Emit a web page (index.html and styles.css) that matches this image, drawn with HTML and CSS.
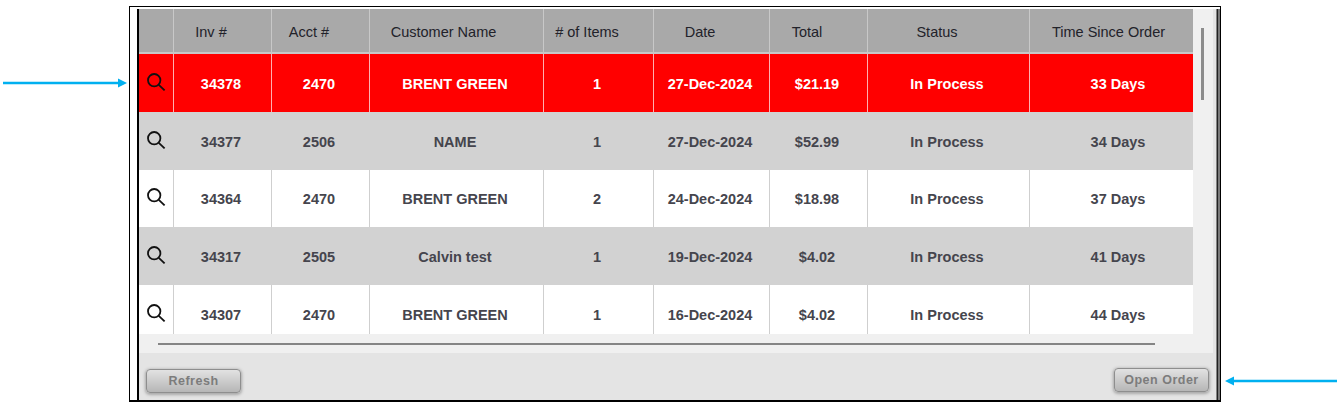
FILE: index.html
```html
<!DOCTYPE html>
<html lang="en">
<head>
<meta charset="utf-8">
<title>Orders</title>
<link rel="stylesheet" href="styles.css">
</head>
<body>
<svg class="arrow arrow-left" width="124" height="10" viewBox="0 0 124 10"><path d="M0 5H117" stroke="#00b0f0" stroke-width="2.6" fill="none"/><path d="M115 .5l9 4.5-9 4.5z" fill="#00b0f0"/></svg>
<div class="frame">
  <div class="panel">
    <div class="upper">
      <div class="grid-area">
        <div class="table">
          <div class="row head">
            <div class="cell"></div><div class="cell">Inv #</div><div class="cell">Acct #</div><div class="cell name-head">Customer Name</div><div class="cell"># of Items</div><div class="cell">Date</div><div class="cell">Total</div><div class="cell">Status</div><div class="cell last">Time Since Order</div>
          </div>
          <div class="row selected h1">
            <div class="cell"><svg class="lens" viewBox="0 0 20 20"><circle cx="8.2" cy="8.2" r="6.2"/><path d="M12.8 12.8L18.6 18.4"/></svg></div><div class="cell">34378</div><div class="cell">2470</div><div class="cell">BRENT GREEN</div><div class="cell">1</div><div class="cell">27-Dec-2024</div><div class="cell">$21.19</div><div class="cell">In Process</div><div class="cell last">33 Days</div>
          </div>
          <div class="row alt h1">
            <div class="cell"><svg class="lens" viewBox="0 0 20 20"><circle cx="8.2" cy="8.2" r="6.2"/><path d="M12.8 12.8L18.6 18.4"/></svg></div><div class="cell">34377</div><div class="cell">2506</div><div class="cell">NAME</div><div class="cell">1</div><div class="cell">27-Dec-2024</div><div class="cell">$52.99</div><div class="cell">In Process</div><div class="cell last">34 Days</div>
          </div>
          <div class="row h2">
            <div class="cell"><svg class="lens" viewBox="0 0 20 20"><circle cx="8.2" cy="8.2" r="6.2"/><path d="M12.8 12.8L18.6 18.4"/></svg></div><div class="cell">34364</div><div class="cell">2470</div><div class="cell">BRENT GREEN</div><div class="cell">2</div><div class="cell">24-Dec-2024</div><div class="cell">$18.98</div><div class="cell">In Process</div><div class="cell last">37 Days</div>
          </div>
          <div class="row alt h1">
            <div class="cell"><svg class="lens" viewBox="0 0 20 20"><circle cx="8.2" cy="8.2" r="6.2"/><path d="M12.8 12.8L18.6 18.4"/></svg></div><div class="cell">34317</div><div class="cell">2505</div><div class="cell">Calvin test</div><div class="cell">1</div><div class="cell">19-Dec-2024</div><div class="cell">$4.02</div><div class="cell">In Process</div><div class="cell last">41 Days</div>
          </div>
          <div class="row h1">
            <div class="cell"><svg class="lens" viewBox="0 0 20 20"><circle cx="8.2" cy="8.2" r="6.2"/><path d="M12.8 12.8L18.6 18.4"/></svg></div><div class="cell">34307</div><div class="cell">2470</div><div class="cell">BRENT GREEN</div><div class="cell">1</div><div class="cell">16-Dec-2024</div><div class="cell">$4.02</div><div class="cell">In Process</div><div class="cell last">44 Days</div>
          </div>
        </div>
        <div class="vbar"><div class="vthumb"></div></div>
      </div>
      <div class="hbar"><div class="hthumb"></div></div>
    </div>
    <div class="toolbar">
      <button class="btn btn-refresh">Refresh</button>
      <button class="btn btn-open">Open Order</button>
    </div>
  </div>
</div>
<svg class="arrow arrow-right" width="112" height="10" viewBox="0 0 112 10"><path d="M7 5H112" stroke="#00b0f0" stroke-width="2.6" fill="none"/><path d="M9 .5L0 5l9 4.5z" fill="#00b0f0"/></svg>
</body>
</html>
```
FILE: styles.css
```css
html, body { margin: 0; padding: 0; background: #fff; }
body { position: relative; width: 1339px; height: 407px; overflow: hidden; font-family: "Liberation Sans", Arial, sans-serif; padding-top: 6px; box-sizing: border-box; }
.arrow { position: absolute; display: block; }
.arrow-left { left: 3px; top: 78px; }
.arrow-right { left: 1225px; top: 376px; }
.frame { margin-left: 129px; width: 1092px; height: 396px; box-sizing: border-box; border: 1px solid #000; border-width: 1.5px 1.5px 2px 1.5px; padding: 1.5px 0 0 7px; background: #fff; }
.panel { height: 100%; border-left: 2px solid #000; border-right: 2.5px solid #7a7a7a; background: #e4e4e4; padding-right: 5px; display: flex; flex-direction: column; box-sizing: border-box; box-shadow: inset -1.5px 0 #222; }
.upper { background: #f0f0f0; height: 344px; flex: none; }
.grid-area { display: flex; height: 325px; }
.table { width: 1054px; height: 325px; overflow: hidden; flex: none; }
.row { display: grid; grid-template-columns: 34px 98px 98px 174px 110px 116px 98px 162px 164px; background: #fff; color: #45454d; font-weight: 700; font-size: 14.5px; height: 58px; }
.row.h1 { height: 58px; }
.row.h2 { height: 57px; }
.cell { display: flex; align-items: center; justify-content: center; border-left: 1px solid #cfcfcf; box-sizing: border-box; padding: 2px 3px 0 0; }
.cell:first-child { border-left: 0; padding: 0 1px 0 0; }
.cell.last { padding: 2px 0 0 13px; }
.head { height: 45px; background: #a9a9a9; color: #22222a; font-weight: 400; font-size: 14.5px; border-bottom: 2px solid #c8c8c8; box-sizing: border-box; }
.head .cell { padding: 3px 23px 0 0; border-left-color: #c8c8c8; }
.head .name-head { padding-right: 26px; }
.head .cell.last { padding: 3px 6px 0 0; }
.selected { background: #f00; color: #fff; }
.selected .cell { border-left-color: #ffb0b0; }
.alt { background: #d2d2d2; }
.alt .cell { border-left-color: #d2d2d2; }
.lens { width: 20px; height: 20px; fill: none; stroke: #111; stroke-width: 1.8; margin-top: -2px; }
.vbar { flex: 1; display: flex; justify-content: center; padding-top: 19px; box-sizing: border-box; }
.vthumb { width: 3px; height: 72px; background: #8c8c8c; margin-right: 2px; }
.hbar { padding: 9px 0 0 19px; }
.hthumb { width: 997px; height: 2px; background: #858585; }
.toolbar { flex: 1; display: flex; justify-content: space-between; padding: 16px 4px 0 7px; align-items: flex-start; }
.btn { width: 95px; height: 24px; padding: 0; font-family: "Liberation Sans", Arial, sans-serif; font-size: 12.5px; font-weight: 700; letter-spacing: 0.5px; color: #7c7c7c; border: 1px solid #8e8e8e; border-radius: 4px; background: linear-gradient(#e2e2e2, #b6b6b6); box-shadow: 0 1px 3px 1px #a8a8a8; }
.btn-open { margin-top: -1px; }
```
